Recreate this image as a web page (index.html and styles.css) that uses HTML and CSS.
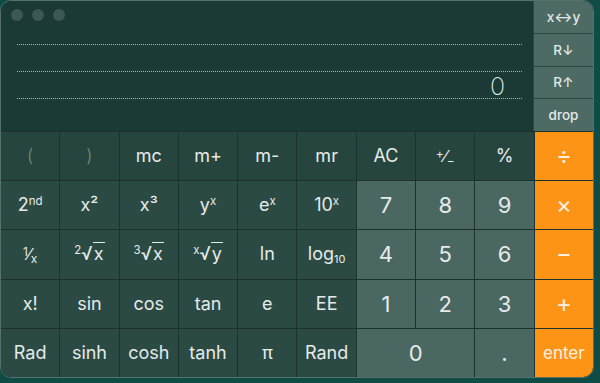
FILE: index.html
```html
<!DOCTYPE html>
<html lang="en">

<head>
    <meta charset="UTF-8">
    <title>Calculator RPN</title>
    <link rel="stylesheet" href="styles.css">
</head>

<body>
    <div class="window">
        <div class="top">
            <div class="display">
                <div class="lights">
                    <span class="light"></span>
                    <span class="light"></span>
                    <span class="light"></span>
                </div>
                <div class="line"></div>
                <div class="line"></div>
                <div class="line"><span class="value">0</span></div>
            </div>
            <div class="stack">
                <button class="stack-btn">x↔y</button>
                <button class="stack-btn">R↓</button>
                <button class="stack-btn">R↑</button>
                <button class="stack-btn">drop</button>
            </div>
        </div>

        <div class="keys">
            <button class="key top-key muted">(</button>
            <button class="key top-key muted">)</button>
            <button class="key top-key">mc</button>
            <button class="key top-key">m+</button>
            <button class="key top-key">m-</button>
            <button class="key top-key">mr</button>
            <button class="key top-key">AC</button>
            <button class="key top-key"><span class="frac"><sup>+</sup>⁄<sub>−</sub></span></button>
            <button class="key top-key">%</button>
            <button class="key op">÷</button>

            <button class="key fn">2<sup>nd</sup></button>
            <button class="key fn">x²</button>
            <button class="key fn">x³</button>
            <button class="key fn">y<sup>x</sup></button>
            <button class="key fn">e<sup>x</sup></button>
            <button class="key fn">10<sup>x</sup></button>
            <button class="key num">7</button>
            <button class="key num">8</button>
            <button class="key num">9</button>
            <button class="key op">×</button>

            <button class="key fn"><span class="frac"><sup>1</sup>⁄<sub>x</sub></span></button>
            <button class="key fn"><sup class="idx">2</sup>√<span class="rad">x</span></button>
            <button class="key fn"><sup class="idx">3</sup>√<span class="rad">x</span></button>
            <button class="key fn"><sup class="idx">x</sup>√<span class="rad">y</span></button>
            <button class="key fn">ln</button>
            <button class="key fn">log<sub>10</sub></button>
            <button class="key num">4</button>
            <button class="key num">5</button>
            <button class="key num">6</button>
            <button class="key op">−</button>

            <button class="key fn">x!</button>
            <button class="key fn">sin</button>
            <button class="key fn">cos</button>
            <button class="key fn">tan</button>
            <button class="key fn">e</button>
            <button class="key fn">EE</button>
            <button class="key num">1</button>
            <button class="key num">2</button>
            <button class="key num">3</button>
            <button class="key op">+</button>

            <button class="key fn">Rad</button>
            <button class="key fn">sinh</button>
            <button class="key fn">cosh</button>
            <button class="key fn">tanh</button>
            <button class="key fn">π</button>
            <button class="key fn">Rand</button>
            <button class="key num zero">0</button>
            <button class="key num">.</button>
            <button class="key op enter">enter</button>
        </div>
    </div>
</body>

</html>
```

FILE: styles.css
```css
body {
    margin: 0px;
    padding: 0px;
    background-color: #0e4c45;
    font-family: Inter, "Liberation Sans", sans-serif;
}

.window {
    width: 592px;
    height: 376px;
    border: 1px solid #56706a;
    border-radius: 11px;
    overflow: hidden;
    background-color: #1b3834;
    display: flex;
    flex-direction: column;
}

.top {
    display: flex;
    height: 130px;
}

.display {
    flex: 1;
    background-color: #1b3a36;
    padding: 17px 11px 0px 16px;
    position: relative;
}

.lights {
    position: absolute;
    top: 8px;
    left: 10px;
    display: flex;
    gap: 9px;
}

.light {
    width: 12px;
    height: 12px;
    border-radius: 50%;
    background-color: #3d5752;
}

.line {
    height: 26px;
    border-bottom: 1px dotted #a9b8b4;
    display: flex;
    justify-content: flex-end;
    align-items: flex-end;
}

.value {
    color: #dfe6e3;
    font-size: 25px;
    font-weight: 200;
    line-height: 25px;
    padding-right: 17px;
    margin-bottom: -1px;
}

.stack {
    width: 59px;
    display: flex;
    flex-direction: column;
    gap: 1px;
    background-color: #2e4541;
    border-left: 1px solid #2e4541;
}

.stack-btn {
    flex: 1;
    border: none;
    background-color: #4d6a64;
    color: #e3e9e7;
    font-family: inherit;
    font-size: 13.5px;
    font-weight: 500;
    padding: 0px;
}

.keys {
    flex: 1;
    display: grid;
    grid-template-columns: repeat(10, 1fr);
    grid-template-rows: repeat(5, 1fr);
    gap: 1px;
    background-color: #1c322e;
    border-top: 1px solid #1c322e;
}

.key {
    border: none;
    padding: 0px;
    font-family: inherit;
    color: #e6ebe9;
    font-size: 18px;
    font-weight: 400;
    line-height: 20px;
}

.key sup {
    font-size: 11.5px;
    vertical-align: 6px;
    line-height: 1;
}

.key sub {
    font-size: 11px;
    vertical-align: -3px;
    line-height: 1;
}

.top-key {
    background-color: #27453f;
}

.muted {
    color: #6f8b85;
    font-weight: 300;
}

.fn {
    background-color: #2b4a44;
}

.num {
    background-color: #4a6762;
    font-size: 22px;
}

.zero {
    grid-column: span 2;
}

.op {
    background-color: #fd9416;
    color: #fdf2e2;
    font-size: 24px;
}

.enter {
    font-size: 17px;
}

.frac {
    font-size: 16px;
}

.frac sup,
.frac sub {
    font-size: 12px;
}

.frac sup {
    vertical-align: 4px;
}

.idx {
    margin-right: 0px;
}

.rad {
    border-top: 1px solid #e6ebe9;
    padding: 0px 1px;
}
```
